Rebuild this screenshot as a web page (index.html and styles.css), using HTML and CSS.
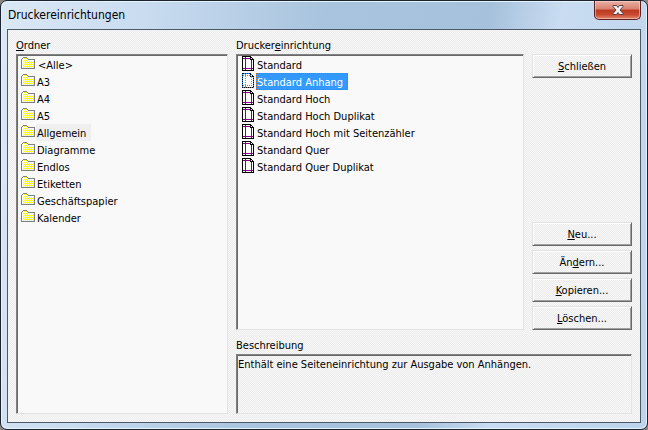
FILE: index.html
```html
<!DOCTYPE html>
<html lang="de">
<head>
    <meta charset="UTF-8">
    <meta name="viewport" content="width=device-width, initial-scale=1.0">
    <title>Druckereinrichtungen</title>
    <link rel="stylesheet" href="styles.css">
</head>
<body>
    <!-- Shared icons -->
    <svg class="sprite" aria-hidden="true">
        <defs>
            <pattern id="dots" width="2" height="2" patternUnits="userSpaceOnUse">
                <rect width="2" height="2" fill="#f8f8f8"/>
                <rect width="1" height="1" fill="#ffff00"/>
                <rect x="1" y="1" width="1" height="1" fill="#ffff00"/>
            </pattern>
        </defs>
        <symbol id="folder" viewBox="0 0 14 12">
            <path d="M0.5 11.5V2.5L2.5 0.5H5.5L7.5 2.5H13.5V11.5Z" fill="url(#dots)" stroke="#808080"/>
            <path d="M1.5 10.5V3M2 2.5H5.5L7 3.5H13" fill="none" stroke="#ffffff"/>
        </symbol>
        <symbol id="page" viewBox="0 0 12 15">
            <path d="M0.5 0.5H8.5L11.5 3.5V14.5H0.5Z" fill="#ffffff" stroke="none"/>
            <path d="M3.5 1V14M9.5 4V14M1 2.5H8M1 12.5H11" fill="none" stroke="#800080"/>
            <path d="M0.5 0.5H8.5L11.5 3.5V14.5H0.5ZM8.5 1V3.5H11" fill="none" stroke="#000000"/>
        </symbol>
        <symbol id="page-selected" viewBox="0 0 12 15">
            <path d="M0.5 0.5H8.5L11.5 3.5V14.5H0.5Z" fill="#ffffff" stroke="none"/>
            <path d="M3.5 1V14M9.5 4V14M1 2.5H8M1 12.5H11" fill="none" stroke="#3399ff" stroke-dasharray="1 1"/>
            <path d="M0.5 0.5H8.5L11.5 3.5V14.5H0.5ZM8.5 1V3.5H11" fill="none" stroke="#3399ff"/>
            <path d="M0.5 0.5H8.5L11.5 3.5V14.5H0.5ZM8.5 1V3.5H11" fill="none" stroke="#000000" stroke-dasharray="1 1"/>
        </symbol>
    </svg>

    <div class="window">
        <div class="titlebar">
            <h1 class="title">Druckereinrichtungen</h1>
            <button type="button" class="close" aria-label="Fenster schließen">
                <svg width="12" height="10" viewBox="0 0 12 10">
                    <path d="M1 0.5H4.5L6 2.5L7.5 0.5H11V1.5L8 5L11 8.5V9.5H7.5L6 7.5L4.5 9.5H1V8.5L4 5L1 1.5Z" fill="#f4f4f4" stroke="#5a3f4a"/>
                </svg>
            </button>
        </div>

        <div class="client">
            <!-- Folders -->
            <div class="folders">
                <h2 class="label" id="folders-label"><u>O</u>rdner</h2>
                <ul class="list" aria-labelledby="folders-label">
                    <li><button type="button" class="item root"><svg class="folder"><use href="#folder"/></svg><span>&lt;Alle&gt;</span></button></li>
                    <li><button type="button" class="item"><svg class="folder"><use href="#folder"/></svg><span>A3</span></button></li>
                    <li><button type="button" class="item"><svg class="folder"><use href="#folder"/></svg><span>A4</span></button></li>
                    <li><button type="button" class="item"><svg class="folder"><use href="#folder"/></svg><span>A5</span></button></li>
                    <li><button type="button" class="item current"><svg class="folder"><use href="#folder"/></svg><span>Allgemein</span></button></li>
                    <li><button type="button" class="item"><svg class="folder"><use href="#folder"/></svg><span>Diagramme</span></button></li>
                    <li><button type="button" class="item"><svg class="folder"><use href="#folder"/></svg><span>Endlos</span></button></li>
                    <li><button type="button" class="item"><svg class="folder"><use href="#folder"/></svg><span>Etiketten</span></button></li>
                    <li><button type="button" class="item"><svg class="folder"><use href="#folder"/></svg><span>Geschäftspapier</span></button></li>
                    <li><button type="button" class="item"><svg class="folder"><use href="#folder"/></svg><span>Kalender</span></button></li>
                </ul>
            </div>

            <!-- Printer setups -->
            <div class="setups">
                <h2 class="label" id="setups-label">Drucker<u>e</u>inrichtung</h2>
                <ul class="list" aria-labelledby="setups-label">
                    <li><button type="button" class="item"><svg class="page"><use href="#page"/></svg><span>Standard</span></button></li>
                    <li><button type="button" class="item selected"><svg class="page"><use href="#page-selected"/></svg><span>Standard Anhang</span></button></li>
                    <li><button type="button" class="item"><svg class="page"><use href="#page"/></svg><span>Standard Hoch</span></button></li>
                    <li><button type="button" class="item"><svg class="page"><use href="#page"/></svg><span>Standard Hoch Duplikat</span></button></li>
                    <li><button type="button" class="item"><svg class="page"><use href="#page"/></svg><span>Standard Hoch mit Seitenzähler</span></button></li>
                    <li><button type="button" class="item"><svg class="page"><use href="#page"/></svg><span>Standard Quer</span></button></li>
                    <li><button type="button" class="item"><svg class="page"><use href="#page"/></svg><span>Standard Quer Duplikat</span></button></li>
                </ul>
            </div>

            <!-- Buttons -->
            <div class="actions">
                <button type="button" class="btn"><u>S</u>chließen</button>
                <div class="edit">
                    <button type="button" class="btn"><u>N</u>eu...</button>
                    <button type="button" class="btn">Än<u>d</u>ern...</button>
                    <button type="button" class="btn"><u>K</u>opieren...</button>
                    <button type="button" class="btn"><u>L</u>öschen...</button>
                </div>
            </div>

            <!-- Description -->
            <div class="description">
                <label class="label" for="description">Beschreibung</label>
                <textarea id="description" class="text" readonly>Enthält eine Seiteneinrichtung zur Ausgabe von Anhängen.</textarea>
            </div>
        </div>
    </div>
</body>
</html>
```
FILE: styles.css
```css
* {
    box-sizing: border-box;
}

html, body {
    height: 100%;
    margin: 0;
    background-color: #8a8580;
}

body, button, textarea {
    font-family: "DejaVu Sans Condensed", "Noto Sans", sans-serif;
    font-size: 11px;
    line-height: 15px;
    color: #000;
}

.sprite {
    position: absolute;
    width: 0;
    height: 0;
}

/* Window frame */
.window {
    display: flex;
    flex-direction: column;
    height: 100vh;
    padding: 0 6px 6px;
    border: 1px solid #1c2430;
    border-radius: 7px;
    background: linear-gradient(100deg, #dbe8f5 0, #c9dcf0 20%, #a9c4de 45%, #a6c1dc 68%, #c9dcf1 78%, #bcd4ec 100%);
    box-shadow: inset 0 0 0 1px #e4f2fc;
}

.titlebar {
    display: flex;
    flex: none;
    justify-content: space-between;
    height: 28px;
}

.title {
    margin: 0;
    padding: 5px 1px;
    font-size: 12px;
    font-weight: normal;
    line-height: 18px;
}

.close {
    display: flex;
    align-items: center;
    justify-content: center;
    width: 47px;
    height: 19px;
    padding: 0;
    border: 1px solid #5c2228;
    border-top: none;
    border-radius: 0 0 5px 5px;
    background: linear-gradient(#e8b0a4 0, #d9826f 45%, #bb3a22 50%, #c8492e 75%, #e08a70 100%);
    box-shadow: inset 0 0 0 1px rgba(255, 220, 210, 0.5);
}

/* Dialog area */
.client {
    display: grid;
    flex: 1;
    grid-template-columns: minmax(0, 212fr) minmax(0, 288fr) 100px;
    grid-template-rows: minmax(0, 1fr) 76px;
    column-gap: 8px;
    row-gap: 8px;
    min-height: 0;
    padding: 8px;
    border: 1px solid #4c5a68;
    background: repeating-conic-gradient(#ececef 0 25%, #f8f8f6 0 50%) 0 0 / 2px 2px;
}

.folders,
.setups,
.description {
    display: flex;
    flex-direction: column;
    min-height: 0;
}

.folders {
    grid-row: 1 / 3;
}

.description {
    grid-column: 2 / 4;
}

.label {
    flex: none;
    height: 16px;
    margin: 0;
    font-size: 11px;
    font-weight: normal;
    line-height: 15px;
}

.list,
.text {
    flex: 1;
    margin: 0;
    border: 1px solid;
    border-color: #808080 #e4e4e4 #e4e4e4 #808080;
    box-shadow: inset 1px 1px 0 #696969;
}

.list {
    padding: 1px 4px;
    list-style: none;
    overflow: auto;
    background-color: #f9f9f9;
}

.item {
    display: flex;
    align-items: center;
    width: 100%;
    height: 17px;
    padding: 0;
    border: none;
    background: none;
    text-align: left;
    white-space: nowrap;
}

.item span {
    padding: 2px 5px 0 1px;
}

.root span {
    padding-left: 2px;
}

.folder {
    width: 14px;
    height: 12px;
    margin-right: 1px;
    margin-bottom: 3px;
    shape-rendering: crispEdges;
}

.page {
    width: 12px;
    height: 15px;
    margin-left: 1px;
    margin-right: 2px;
    margin-bottom: 2px;
    shape-rendering: crispEdges;
}

.current span {
    background-color: #efefef;
}

.selected span {
    outline: 1px dotted #cc6600;
    outline-offset: -1px;
    background-color: #3399ff;
    color: #fff;
}

/* Buttons */
.actions {
    display: flex;
    flex-direction: column;
    justify-content: space-between;
    padding-top: 16px;
}

.edit {
    display: flex;
    flex-direction: column;
    gap: 4px;
}

.btn {
    width: 100%;
    height: 24px;
    padding: 0;
    border: 1px solid;
    border-color: #e3e3e3 #696969 #696969 #e3e3e3;
    background: none;
    box-shadow: inset 1px 1px 0 #fff, inset -1px -1px 0 #a0a0a0;
}

.text {
    width: 100%;
    padding: 2px 1px;
    background: none;
    resize: none;
    outline: none;
}
```
